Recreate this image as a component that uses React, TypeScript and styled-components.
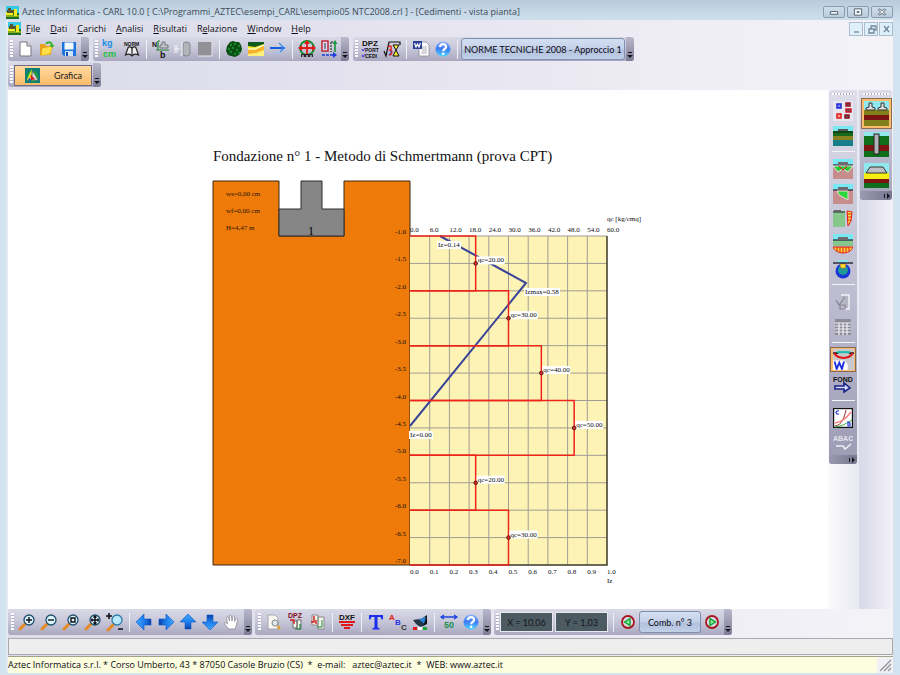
import React from "react";
import styled, { createGlobalStyle, css } from "styled-components";

const ui = `"Open Sans", "Noto Sans", sans-serif`;
const sans = `Lato, "Liberation Sans", Arial, sans-serif`;
const serif = `"Liberation Serif", "Times New Roman", serif`;

const GlobalStyle = createGlobalStyle`
  * { box-sizing: border-box; }
  body { margin: 0; background: #d3e3f0; }
  button, input { font: inherit; color: inherit; margin: 0; }
`;

const AppWindow = styled.div`
  min-height: 100vh;
  display: flex;
  flex-direction: column;
  padding: 0 7px 2px 6px;
  background: linear-gradient(180deg, #b9cadb 0, #d3e3f0 24px);
  font-family: ${ui};
  font-size: 10px;
  color: #1a1a22;
`;

const TitleBar = styled.header`
  height: 20px;
  display: flex;
  align-items: center;
  gap: 3px;
  padding: 4px 0 0;
`;

const Title = styled.h1`
  flex: 1;
  margin: 0;
  font-size: 9px;
  line-height: 14px;
  font-weight: 400;
  white-space: nowrap;
  color: #3f4c5a;
`;

const WindowButtons = styled.div<{ $small?: boolean }>`
  display: flex;
  gap: ${(p) => (p.$small ? 1 : 2)}px;
`;

const WindowButton = styled.button<{ $small?: boolean }>`
  width: ${(p) => (p.$small ? 14 : 22)}px;
  height: ${(p) => (p.$small ? 14 : 12)}px;
  padding: 0;
  display: grid;
  place-items: center;
  border: 1px solid ${(p) => (p.$small ? "#a9bfd0" : "#8b9cb0")};
  border-radius: ${(p) => (p.$small ? 0 : 2)}px;
  background: ${(p) => (p.$small ? "#e0f0fa" : "linear-gradient(#d0deeb, #b9cbdc)")};
`;

const Client = styled.div`
  flex: 1;
  display: flex;
  flex-direction: column;
  border-left: 2px solid #e3eaf4;
  background: linear-gradient(90deg, #dcdcea 0%, #e2e1ed 35%, #eeedf5 75%, #f4f3f8 100%);
`;

const MenuBar = styled.nav`
  height: 17px;
  display: flex;
  align-items: center;
  gap: 10px;
`;

const MenuIcon = styled.span`
  display: flex;
  margin-right: -5px;
`;

const MenuItem = styled.a`
  color: #0c0c14;
  text-decoration: none;
  font-size: 9px;
  line-height: 14px;
  white-space: nowrap;
`;

const Spacer = styled.div`
  flex: 1;
`;

const ToolRow = styled.div<{ $gap?: number }>`
  display: flex;
  gap: ${(p) => p.$gap ?? 4}px;
  padding-bottom: 2px;
`;

const barFill = "linear-gradient(180deg, #dad9e6 0%, #c9c8da 45%, #a9a8c0 100%)";

const Toolbar = styled.div<{ $tall?: boolean }>`
  display: flex;
  align-items: center;
  height: ${(p) => (p.$tall ? 26 : 24)}px;
  border-radius: 3px;
  background: ${barFill};
`;

const Grip = styled.span<{ $wide?: boolean }>`
  flex: none;
  width: ${(p) => (p.$wide ? 8 : 6)}px;
  height: 18px;
  background: repeating-linear-gradient(180deg, #fbfbff 0 2px, #b1b0c5 2px 3px) center / 3px 18px no-repeat;
`;

const Sep = styled.span`
  flex: none;
  width: 1px;
  height: 19px;
  margin: 0 3px;
  background: #efeff6;
`;

const ToolButton = styled.button`
  flex: none;
  width: 22px;
  height: 22px;
  padding: 0;
  border: 0;
  background: none;
  display: grid;
  place-items: center;
`;

const MoreButton = styled.button`
  flex: none;
  align-self: stretch;
  width: 8px;
  margin-left: 1px;
  padding: 0 0 3px;
  border: 0;
  border-radius: 0 3px 3px 0;
  background: linear-gradient(180deg, #b9b8cb, #7d7c96);
  display: flex;
  align-items: flex-end;
  justify-content: center;
`;

const raised = css`
  border: 1px solid #7e8fb0;
  border-radius: 3px;
  background: linear-gradient(180deg, #d3dff2 0%, #c3d0e8 50%, #b1c0dc 55%, #c2d0e8 100%);
  color: #0b0b14;
`;

const TextButton = styled.button<{ $width: number }>`
  ${raised}
  width: ${(p) => p.$width}px;
  height: 22px;
  padding: 0;
  font-family: ${sans};
  font-size: 9px;
  white-space: nowrap;
`;

const ModeButton = styled.button`
  width: 78px;
  height: 21px;
  padding: 0 0 0 10px;
  display: flex;
  align-items: center;
  gap: 14px;
  border: 1px solid #6f6a86;
  background: linear-gradient(180deg, #ffd9a0, #fcbc6a);
  font-family: ${sans};
  font-size: 9px;
`;

const Workspace = styled.main`
  flex: 1;
  display: flex;
  margin-top: 1px;
`;

const Canvas = styled.section`
  flex: 1;
  min-width: 0;
  padding: 56px 0 0 205px;
  background: #fff;
`;

const ChartTitle = styled.h2`
  margin: 0 0 15px;
  font-family: ${serif};
  font-size: 15px;
  line-height: 20px;
  font-weight: 400;
  color: #111;
  white-space: nowrap;
`;

const Chart = styled.svg`
  display: block;
  width: 440px;
  max-width: 100%;
  overflow: visible;
  font-family: ${serif};
  font-size: 7px;
`;

const DockColumn = styled.aside<{ $wide?: boolean }>`
  width: ${(p) => (p.$wide ? 34 : 31)}px;
  padding: 0 1px;
  background: ${(p) =>
    p.$wide
      ? "linear-gradient(90deg, #d9d9e8, #f2f1f8)"
      : "linear-gradient(90deg, #fafafd, #e9e9f2)"};
`;

const Dock = styled.div<{ $wide?: boolean }>`
  width: ${(p) => (p.$wide ? 32 : 28)}px;
  display: flex;
  flex-direction: column;
  align-items: center;
  border-radius: 3px;
  background: ${(p) =>
    p.$wide
      ? "linear-gradient(180deg, #dddce9, #b9b8cc 60%, #a4a3ba)"
      : "linear-gradient(180deg, #dddce9, #c1c0d3 50%, #9c9bb4)"};
`;

const DockGrip = styled.span`
  width: 80%;
  height: 8px;
  background: repeating-linear-gradient(90deg, #fff 0 2px, #a9a8bd 2px 3px) center / 100% 2px no-repeat;
`;

const DockButton = styled.button<{ $wide?: boolean; $active?: boolean }>`
  flex: none;
  width: ${(p) => (p.$wide ? 31 : 26)}px;
  height: ${(p) => (p.$wide ? 31 : 25)}px;
  padding: 0;
  display: grid;
  place-items: center;
  border: 1px solid ${(p) => (p.$active ? "#8a6b52" : "transparent")};
  background: ${(p) => (p.$active ? "#fcbc70" : "none")};
`;

const DockSep = styled.span`
  flex: none;
  width: 23px;
  height: 1px;
  margin: 3px 0 4px;
  background: #f3f3f9;
`;

const DockMore = styled.button`
  width: 100%;
  height: 9px;
  padding: 0 2px;
  display: flex;
  align-items: center;
  justify-content: flex-end;
  border: 0;
  border-radius: 0 0 3px 3px;
  background: linear-gradient(90deg, #9b9ab2, #77768f);
`;

const Coordinate = styled.input`
  width: 53px;
  height: 20px;
  margin-right: 2px;
  padding: 0;
  border: 1px solid #e8e8f0;
  background: #4c5a62;
  color: #11161a;
  font-family: ${sans};
  font-size: 9px;
  text-align: center;
`;

const MessageBox = styled.div`
  height: 17px;
  margin-top: 1px;
  border: 1px solid #a9a9ae;
  background: #eeeeee;
`;

const StatusBar = styled.footer`
  height: 17px;
  margin-top: 1px;
  display: flex;
  align-items: center;
  border-top: 1px solid #a3a38c;
  background: #fdfde0;
`;

const StatusText = styled.p`
  flex: 1;
  margin: 0;
  font-size: 9px;
  line-height: 14px;
  white-space: pre;
  color: #0c0c12;
`;

const ResizeCorner = styled.span`
  width: 16px;
  height: 16px;
  background: #f1f1f5;
`;

const Svg = ({ size = 20, children }: { size?: number; children: React.ReactNode }) => (
  <svg width={size} height={size} viewBox="0 0 20 20" aria-hidden="true">
    {children}
  </svg>
);

const AppLogo = () => (
  <svg width="13" height="13" viewBox="0 0 13 13" aria-hidden="true">
    <rect width="13" height="7" fill="#35c9e8" />
    <rect y="7" width="13" height="6" fill="#1f6f22" />
    <rect y="6" width="7" height="3" fill="#f5ee20" />
    <path d="M2 2h3v2h3v3H1V4h1z" fill="#5a5330" />
    <rect x="8" y="3" width="3" height="7" fill="#f3ea1c" />
    <path d="M0 10h13" stroke="#f3ea1c" />
  </svg>
);

const Down = () => (
  <svg width="6" height="6" viewBox="0 0 6 6" aria-hidden="true">
    <path d="M1 .500h4" stroke="#15151c" />
    <path d="M0 3h6L3 6z" fill="#15151c" />
  </svg>
);

const DownMore = () => (
  <MoreButton aria-label="Altri pulsanti">
    <Down />
  </MoreButton>
);

const SideMore = () => (
  <DockMore aria-label="Altri pulsanti">
    <svg width="6" height="6" viewBox="0 0 6 6" aria-hidden="true">
      <path d="M.500 1v4" stroke="#15151c" />
      <path d="M3 0v6l3-3z" fill="#15151c" />
    </svg>
  </DockMore>
);

const pix = { fontFamily: "Liberation Sans", fontWeight: 700 } as const;

const HelpIcon = () => (
  <Svg>
    <defs>
      <linearGradient id="helpBlue" x1="0" y1="0" x2="0" y2="1">
        <stop offset="0" stopColor="#8fb4ff" />
        <stop offset="0.5" stopColor="#3d7cf5" />
        <stop offset="1" stopColor="#4fd8ff" />
      </linearGradient>
    </defs>
    <circle cx="10" cy="10" r="7.5" fill="url(#helpBlue)" />
    <path d="M7 8c0-4 6.500-3.800 6 .2-.3 1.800-2.800 1.900-2.800 4" fill="none" stroke="#fff" strokeWidth="2.200" />
    <circle cx="10.200" cy="14.800" r="1.300" fill="#fff" />
  </Svg>
);

const topFile = [
  <Svg key="n">
    <path d="M5 3h7l4 4v10H5z" fill="#fff" stroke="#77777f" />
    <path d="M12 3v4h4" fill="#e3e3ea" stroke="#77777f" />
  </Svg>,
  <Svg key="o">
    <path d="M3 5h5l1 2h5v9H3z" fill="#e9a21c" />
    <path d="M5 9l11-2-3 8-9 2z" fill="#ffe04a" stroke="#d89a18" strokeWidth=".6" />
    <path d="M9 5c2-3 6-2 6 2" fill="none" stroke="#37b32c" strokeWidth="1.800" />
    <path d="M12.500 6h5l-2.500 3z" fill="#37b32c" />
  </Svg>,
  <Svg key="s">
    <path d="M3 3h14v14H5l-2-2z" fill="#1e74dd" />
    <rect x="5.500" y="3.500" width="9" height="7" fill="#f3f8ff" />
    <rect x="6" y="12" width="8" height="5" fill="#cfe3fb" />
    <rect x="7" y="13" width="2" height="4" fill="#1553b3" />
  </Svg>,
];

const UnitsIcon = (
  <Svg>
    <text x="2" y="7" fontSize="9" fill="#1790e6" {...pix}>kg</text>
    <text x="3" y="18" fontSize="9" fill="#18c23c" {...pix}>cm</text>
  </Svg>
);
const NormIcon = (
  <Svg>
    <text x="2" y="7" fontSize="5" fill="#111" {...pix}>NORM</text>
    <path d="M10 9c-2-2-4-1-4 0l-2.500 7c2-1 5-1 6.500 1 1.500-2 4.500-2 6.500-1L14 9c0-1-2-2-4 0z" fill="#eee" stroke="#222" strokeWidth="1.200" />
    <path d="M10 9v8" stroke="#222" strokeWidth="1.200" />
  </Svg>
);
const ParamIcon = (
  <Svg>
    <text x="1" y="8" fontSize="7" fill="#111" {...pix}>N</text>
    <path d="M7 2v9M7 2h2M5 11h13" stroke="#27842f" strokeWidth="1.200" />
    <path d="M11 3h3v3h3v3H9V6h2z" fill="#c4c4cc" stroke="#66666e" strokeWidth=".8" />
    <text x="9" y="19" fontSize="9" fill="#111" {...pix}>b</text>
  </Svg>
);
const PlateIcon = (
  <Svg>
    <rect x="10" y="3" width="7" height="14" rx="3" fill="#b3b3ba" stroke="#85858f" />
    <path d="M9 3v13H7M4 6v8M2 6v8M2 10h5" stroke="#f4f4fa" fill="none" />
  </Svg>
);
const GreyIcon = (
  <Svg>
    <rect x="3" y="3" width="14" height="14" fill="#909096" />
    <path d="M3 17h14V3" stroke="#e8e8ee" fill="none" />
  </Svg>
);
const SoilIcon = (
  <Svg>
    <path d="M6 3l3-1 3 1 3 0 2 3 1 4-1 3-2 3-4 2-4-1-3-1-2-4 1-5z" fill="#0b4d12" />
    <g fill="#1c8a2e">
      <circle cx="7" cy="6" r="1.200" /><circle cx="11" cy="5" r="1.200" /><circle cx="15" cy="7" r="1.200" />
      <circle cx="5" cy="10" r="1.200" /><circle cx="9" cy="9" r="1.200" /><circle cx="13" cy="11" r="1.200" />
      <circle cx="7" cy="13" r="1.200" /><circle cx="11" cy="15" r="1.200" /><circle cx="15" cy="14" r="1.200" />
    </g>
  </Svg>
);
const LayersIcon = (
  <Svg>
    <rect x="2" y="3" width="16" height="14" fill="#fbe52a" />
    <path d="M2 3h16v2L9 8 2 7z" fill="#0e5a1c" />
    <path d="M2 11l7 0 9-4v5l-9 3-7 1z" fill="#f7b12c" />
    <path d="M2 15l8-1 8-3v6H2z" fill="#fff07a" />
    <path d="M2 10l7 0 9-4" stroke="#fff" fill="none" />
  </Svg>
);
const WaterIcon = (
  <Svg>
    <path d="M2 9h15" stroke="#1261e0" strokeWidth="2" />
    <path d="M11 4l5 5-4 4" stroke="#3b8cf0" strokeWidth="1.400" fill="none" />
    <path d="M7 14h5" stroke="#8fc8ff" />
  </Svg>
);
const AxesIcon = (
  <Svg>
    <circle cx="10" cy="9" r="7" fill="none" stroke="#118a2d" strokeWidth="1.800" />
    <path d="M10 2v14M3 9h14" stroke="#e01919" strokeWidth="1.800" />
    <path d="M10 1l-3 4h6zM1 9l4-3v6zM19 9l-4-3v6z" fill="#e01919" />
    <path d="M4 15h12v3H4z" fill="#26262c" />
    <path d="M6 18v-2M10 18v-2M14 18v-2" stroke="#fff" />
  </Svg>
);
const CombIcon = (
  <Svg>
    <rect x="3" y="2" width="6" height="10" fill="#d6d9f5" stroke="#c01b28" strokeWidth="1.400" />
    <path d="M5 5h2M5 7h2M5 9h2" stroke="#333" />
    <path d="M12 3v10M12 3h2" stroke="#222" strokeDasharray="2 1" />
    <path d="M16 13V3" stroke="#16943a" strokeWidth="1.600" />
    <path d="M16 1l-2.500 4h5z" fill="#16943a" />
    <path d="M3 16h12" stroke="#1c3be0" strokeWidth="1.600" strokeDasharray="3 1" />
    <path d="M18 16l-4-3v6z" fill="#1c3be0" />
  </Svg>
);
const CptIcon = (
  <Svg>
    <text x="2" y="7" fontSize="8" fill="#111" {...pix}>DPZ</text>
    <text x="5" y="13" fontSize="5" fill="#111" {...pix}>PORT</text>
    <text x="5" y="19" fontSize="5" fill="#111" {...pix}>CEDI</text>
    <path d="M2 10l1 2 2-3M2 16l1 2 2-3" stroke="#4b2be0" fill="none" />
  </Svg>
);
const RunIcon = (
  <Svg>
    <path d="M2 12l2 5 3-14h11v3" stroke="#111" strokeWidth="1.200" fill="none" />
    <path d="M11 6h6l-3 5 3 6h-6l3-6z" fill="#f7ee34" stroke="#111" />
    <path d="M6 8c4-3 4 2 2 3 3 1 2 5-1 5" stroke="#e11d1d" fill="none" strokeWidth="1.400" />
    <path d="M7 16c0-2 3-2 2-4" stroke="#2440e0" fill="none" />
  </Svg>
);
const WordIcon = (
  <Svg>
    <path d="M8 3h7l3 3v11H8z" fill="#fff" stroke="#8a8a94" strokeWidth=".8" />
    <path d="M11 8h5M11 10h5M11 12h5M10 14h6" stroke="#9b9ba6" strokeWidth=".8" />
    <rect x="2" y="2" width="9" height="8" fill="#2a3f96" />
    <path d="M3.500 4l1.500 4 1.500-3 1.500 3 1.500-4" stroke="#fff" fill="none" strokeWidth="1.200" />
  </Svg>
);
const GraficaIcon = (
  <svg width="15" height="15" viewBox="0 0 16 16" aria-hidden="true">
    <rect width="16" height="16" fill="#0e7d78" />
    <circle cx="8" cy="9" r="6" fill="#19a13c" />
    <path d="M7 1L2 13h5z" fill="#f3ea2c" />
    <path d="M8 3l6 10H7z" fill="#d8d8dc" stroke="#555" strokeWidth=".6" />
    <path d="M6 7l5 5-5 1z" fill="#d92020" />
    <path d="M3 13l2-3 2 4z" fill="#2542d8" />
  </svg>
);

const Zoomer = ({ mark }: { mark: string }) => (
  <Svg>
    <path d="M8 12l-5 5" stroke="#e48a24" strokeWidth="3" strokeLinecap="round" />
    <circle cx="12" cy="8" r="5" fill="#d9f3fb" stroke="#23506e" strokeWidth="1.300" />
    <path d={mark} stroke="#101018" strokeWidth="1.400" fill="none" />
  </Svg>
);
const marks = [
  "M9 8h6M12 5v6",
  "M9 8h6",
  "M10 6h4v4h-4z",
  "M8 8h8M12 4v8M10.500 5.500l1.500-1.500 1.500 1.500M10.500 10.500l1.500 1.500 1.500-1.500M9 6.500v3M15 6.500v3",
];
const ZoomPrev = (
  <Svg>
    <path d="M9 12l-6 6" stroke="#e48a24" strokeWidth="3" strokeLinecap="round" />
    <circle cx="12" cy="8" r="5" fill="#b9e9fa" stroke="#2e7ca8" strokeWidth="1.300" />
    <path d="M1 4h6M4 1v6M13 17h5" stroke="#101018" strokeWidth="1.600" />
  </Svg>
);
const BlueArrow = ({ turn }: { turn: number }) => (
  <Svg>
    <defs>
      <linearGradient id="arrowBlue" x1="0" y1="0" x2="1" y2="0">
        <stop offset="0" stopColor="#3fa8ff" />
        <stop offset="0.600" stopColor="#1b78ea" />
        <stop offset="1" stopColor="#0b3da8" />
      </linearGradient>
    </defs>
    <path
      d="M2 10l8-8v5h7v6h-7v5z"
      fill="url(#arrowBlue)"
      stroke="#0e58c4"
      strokeWidth=".6"
      transform={`rotate(${turn} 10 10)`}
    />
  </Svg>
);
const HandIcon = (
  <Svg>
    <path
      d="M7 17c-2-2-4-4-4.500-6 1-1 2 0 3 1L4.500 5.500C5 4.300 6.300 4.600 6.500 5.500L7.500 9 7.300 4c.4-1.200 1.700-1.100 2 0L10 9l.8-4.500c.5-1 1.700-.8 1.800.2L12.500 9.500l1.500-3c.8-.8 1.800-.2 1.600.7L14.500 13l-1.500 4z"
      fill="#fff"
      stroke="#8d8d98"
      strokeWidth=".8"
    />
  </Svg>
);
const PreviewIcon = (
  <Svg>
    <path d="M4 3h7l3 3v11H4z" fill="#f7f7f0" stroke="#9b9ba3" strokeWidth=".8" />
    <circle cx="11" cy="11" r="3" fill="#dde7f0" stroke="#888" />
    <path d="M13.500 14l2.500 3" stroke="#e0a020" strokeWidth="2.200" />
  </Svg>
);
const DpzDoc = (
  <Svg>
    <text x="2" y="6" fontSize="7" fill="#7c1018" {...pix}>DPZ</text>
    <path d="M7 9h4v7H7zM11 8h4v9h-4z" fill="#f3f3ea" stroke="#555" strokeWidth=".8" />
    <path d="M4 8h4v4" stroke="#d01818" fill="none" strokeWidth="1.300" />
    <path d="M9 17h5v-5" stroke="#18853a" fill="none" strokeWidth="1.200" />
  </Svg>
);
const DocIcon = (
  <Svg>
    <path d="M4 3h6v10H4zM10 5h6v12h-6z" fill="#f3f3ea" stroke="#777" strokeWidth=".8" />
    <path d="M6 4v6H3M8 8v4" stroke="#d01818" fill="none" strokeWidth="1.400" />
    <path d="M9 15h5V8" stroke="#18853a" fill="none" />
  </Svg>
);
const DxfIcon = (
  <Svg>
    <text x="2" y="8" fontSize="8" fill="#111" {...pix}>DXF</text>
    <path d="M2 10h16M4 13h12M7 16h6" stroke="#e01818" strokeWidth="2" />
  </Svg>
);
const TextIcon = (
  <Svg>
    <path d="M3 3h14v4.500h-1.500L14.500 5h-3v10.500l2 .8V17.500h-7v-1.200l2-.8V5h-3l-1 2.500H3z" fill="#1d2df0" />
  </Svg>
);
const AbcIcon = (
  <Svg>
    <text x="1" y="8" fontSize="8" fill="#e02020" {...pix}>A</text>
    <text x="7" y="13" fontSize="8" fill="#2a35e0" {...pix}>B</text>
    <text x="13" y="18" fontSize="8" fill="#333" {...pix}>C</text>
  </Svg>
);
const PaintIcon = (
  <Svg>
    <path d="M10 8l7-5v9l-4 2z" fill="#111" />
    <path d="M3 8l6-1 5 6-3 2c-3-1-5-3-8-7z" fill="#23384a" />
    <path d="M9 7l5 5 2-7z" fill="#2a86e0" />
    <path d="M3 15h4v3H3z" fill="#e01818" />
    <path d="M8 15h4v3H8z" fill="#fff" />
    <path d="M13 15h4v3h-4z" fill="#18a83a" />
  </Svg>
);
const DimIcon = (
  <Svg>
    <path d="M2 5h16M5 3L2 5l3 2M15 3l3 2-3 2" stroke="#1d46e0" strokeWidth="1.300" fill="none" />
    <text x="5" y="16" fontSize="9" fill="#14904a" {...pix}>50</text>
  </Svg>
);
const StepIcon = ({ flip }: { flip?: boolean }) => (
  <Svg>
    <circle cx="10" cy="10" r="6" fill="#dddce6" stroke="#a81420" strokeWidth="1.800" />
    <path d="M6.500 10l5.500-3.500v7z" fill="#7ff09a" stroke="#12a030" strokeWidth="1.400" transform={flip ? "rotate(180 10 10)" : undefined} />
  </Svg>
);

const PlanIcon = (
  <Svg>
    <rect width="20" height="20" fill="#e8e6ee" />
    <g strokeWidth="1.500">
      <rect x="4" y="3" width="4" height="4" fill="#7484ff" stroke="#1a28d0" />
      <rect x="13" y="2" width="4" height="3" fill="#555" stroke="#a01424" />
      <rect x="13" y="8" width="5" height="3" fill="#555" stroke="#d01828" />
      <rect x="4" y="13" width="4" height="4" fill="#ff9a8c" stroke="#e01818" />
      <rect x="12" y="14" width="4" height="3" fill="#555" stroke="#8c1424" />
    </g>
  </Svg>
);
const StratIcon = (
  <Svg>
    <rect width="20" height="6" fill="#7ae8f2" />
    <rect y="5" width="20" height="5" fill="#176a1d" />
    <rect y="10" width="20" height="4" fill="#8a8420" />
    <rect y="14" width="20" height="6" fill="#177f8c" />
    <path d="M5 3h10v2H5z" fill="#555" />
    <path d="M0 6h20" stroke="#10220f" />
  </Svg>
);
const Ground = ({ fill }: { fill: string }) => (
  <>
    <rect width="20" height="6" fill="#7ae8f2" />
    <rect y="6" width="20" height="14" fill={fill} />
    <path d="M0 6h20" stroke="#223" strokeWidth="1.200" />
    <path d="M5 3h10v3H5z" fill="#6c6c70" />
  </>
);
const BearingIcon = (
  <Svg>
    <Ground fill="#c78d8d" />
    <path d="M0 7h20l-5 6-5-3-5 3z" fill="#2cc63a" stroke="#fff" strokeWidth=".8" />
    <path d="M6 7l4 4 4-4" stroke="#e01818" fill="none" />
  </Svg>
);
const PunchIcon = (
  <Svg>
    <Ground fill="#c78d8d" />
    <path d="M4 7h11v9L6 11z" fill="#2cd63a" stroke="#f2dada" />
  </Svg>
);
const StressIcon = (
  <Svg>
    <rect y="2" width="12" height="16" fill="#86c88c" />
    <path d="M0 3h12" stroke="#223" />
    <path d="M1 1h7v2H1z" fill="#666" />
    <path d="M14 2l5 1-1 9-3 5z" fill="#ffe24a" stroke="#e01818" />
    <path d="M14 5h4M14 8h4M14 11h4" stroke="#e01818" />
  </Svg>
);
const PressureIcon = (
  <Svg>
    <Ground fill="#86c88c" />
    <rect y="12" width="20" height="8" fill="#c5c4d6" />
    <path d="M0 13h20c-3 8-17 8-20 0z" fill="#ffd23a" stroke="#e01818" />
    <path d="M4 13v4M7 13v5M10 13v6M13 13v5M16 13v4" stroke="#e01818" />
  </Svg>
);
const BulbIcon = (
  <Svg>
    <path d="M5 1h10v3H5z" fill="#8be2ec" />
    <circle cx="10" cy="12" r="7.500" fill="#1b36d8" />
    <circle cx="10" cy="11" r="5" fill="#1f9a94" />
    <path d="M7 5h6l-1 4H8z" fill="#ffe22a" stroke="#e06a18" strokeWidth=".6" />
    <path d="M0 4h20" stroke="#223" strokeWidth="1.400" />
  </Svg>
);
const GhostDoc = (
  <Svg>
    <path d="M8 3h8v14h-5" fill="#b7b6c4" stroke="#f4f4fa" strokeWidth="1.400" />
    <path d="M3 8l3 5 6-8M7 13h5v4H7z" fill="none" stroke="#85848f" strokeWidth="1.200" />
  </Svg>
);
const GhostTable = (
  <Svg>
    <rect x="2" y="2" width="16" height="16" fill="#8c8b98" />
    <path d="M2 6h16M2 9h16M2 12h16M2 15h16M6 6v12M10 6v12M14 6v12" stroke="#f1f1f7" strokeWidth="1.200" />
  </Svg>
);
const SettleIcon = (
  <Svg size={21}>
    <rect width="20" height="20" fill="#c9c8cd" />
    <path d="M0 4h5M15 4h5" stroke="#222" strokeWidth="1.600" />
    <path d="M4 3h12" stroke="#18bfa8" strokeWidth="2" />
    <path d="M1 4c4 6 14 6 18 0" fill="none" stroke="#e01818" strokeWidth="2" />
    <path d="M0 20v-9h11l3 4v5z" fill="#fff" />
    <path d="M1.500 12l2 7 2.500-6 2.500 6 2-7" fill="none" stroke="#1c30e0" strokeWidth="1.800" />
  </Svg>
);
const FondIcon = (
  <Svg>
    <text x="0" y="7" fontSize="7" fill="#111" {...pix}>FOND</text>
    <path d="M2 11h9V8l6 5-6 4v-3H2z" fill="#d6dcff" stroke="#1a2386" strokeWidth="1.600" />
  </Svg>
);
const CurvesIcon = (
  <Svg>
    <rect x=".500" y=".500" width="19" height="19" fill="#fff" stroke="#111" strokeWidth="1.400" />
    <path d="M2 18C9 17 11 10 13 2" stroke="#9a2a2a" fill="none" />
    <path d="M2 15c8-1 12-6 16-11" stroke="#ff7a7a" fill="none" strokeWidth="1.300" />
    <path d="M2 19c8-1 12-4 17-7" stroke="#32a83c" fill="none" />
    <path d="M6 3c-4-1-4 4 0 3M15 14v4h2v-3z" stroke="#2636e0" fill="none" strokeWidth="1.200" />
  </Svg>
);
const AbacIcon = (
  <Svg>
    <text x="0" y="8" fontSize="7" fill="#e6e5ee" {...pix}>ABAC</text>
    <path d="M3 13h7l2 3 6-5" fill="none" stroke="#efeff5" strokeWidth="1.600" />
  </Svg>
);

const FootingsBig = (
  <svg width="25" height="25" viewBox="0 0 25 25" aria-hidden="true">
    <rect width="25" height="9" fill="#8fe9ee" />
    <rect y="9" width="25" height="16" fill="#81801a" />
    <rect y="14" width="25" height="5" fill="#7d1414" />
    <path d="M2 9V7l3-1V2h3v4l3 1v2zM14 9V7l3-1V2h3v4l3 1v2z" fill="#ddd" stroke="#333" />
  </svg>
);
const PileBig = (
  <svg width="25" height="25" viewBox="0 0 25 25" aria-hidden="true">
    <rect width="25" height="5" fill="#8fe9ee" />
    <rect y="4" width="25" height="21" fill="#0f6e1a" />
    <rect y="13" width="25" height="6" fill="#7d1414" />
    <rect x="10" y="2" width="5" height="20" fill="#b2b2b8" stroke="#222" />
  </svg>
);
const RaftBig = (
  <svg width="25" height="25" viewBox="0 0 25 25" aria-hidden="true">
    <rect width="25" height="10" fill="#8fe9ee" />
    <rect y="10" width="25" height="6" fill="#f4ee12" />
    <rect y="16" width="25" height="4" fill="#7d1414" />
    <rect y="20" width="25" height="5" fill="#0f6e1e" />
    <path d="M6 4h13l4 6H2z" fill="#c0c0c4" stroke="#333" />
  </svg>
);

type Tool = [string, React.ReactNode] | "sep";

const renderTools = (tools: Tool[]) =>
  tools.map((t, i) =>
    t === "sep" ? (
      <Sep key={i} />
    ) : (
      <ToolButton key={i} aria-label={t[0]}>
        {t[1]}
      </ToolButton>
    )
  );

const fileTools: Tool[] = [
  ["Nuovo", topFile[0]],
  ["Apri", topFile[1]],
  ["Salva", topFile[2]],
];
const dataTools: Tool[] = [
  ["Unità di misura", UnitsIcon],
  ["Normativa", NormIcon],
  "sep",
  ["Fattori", ParamIcon],
  ["Piastra", PlateIcon],
  ["Sezione", GreyIcon],
  "sep",
  ["Terreni", SoilIcon],
  ["Stratigrafia", LayersIcon],
  ["Falda", WaterIcon],
  "sep",
  ["Carichi", AxesIcon],
  ["Combinazioni", CombIcon],
];
const analysisTools: Tool[] = [
  ["Opzioni", CptIcon],
  ["Analisi", RunIcon],
  "sep",
  ["Relazione", WordIcon],
  ["Guida", <HelpIcon key="h" />],
  "sep",
];
const zoomTools: Tool[] = [
  ...["Ingrandisci", "Riduci", "Zoom finestra", "Zoom tutto"].map(
    (n, i): Tool => [n, <Zoomer key={n} mark={marks[i]} />]
  ),
  ["Zoom precedente", ZoomPrev],
  "sep",
  ["Sinistra", <BlueArrow key="l" turn={0} />],
  ["Destra", <BlueArrow key="r" turn={180} />],
  ["Su", <BlueArrow key="u" turn={90} />],
  ["Giù", <BlueArrow key="d" turn={270} />],
  ["Sposta", HandIcon],
];
const printTools: Tool[] = [
  ["Anteprima", PreviewIcon],
  ["Opzioni disegno", DpzDoc],
  ["Copia", DocIcon],
  "sep",
  ["Esporta DXF", DxfIcon],
  "sep",
  ["Testo", TextIcon],
  ["Caratteri", AbcIcon],
  ["Colori", PaintIcon],
  "sep",
  ["Quote", DimIcon],
  ["Guida", <HelpIcon key="h" />],
];
const resultTools: Tool[] = [
  ["Pianta", PlanIcon],
  ["Stratigrafia", StratIcon],
  "sep",
  ["Portanza", BearingIcon],
  ["Scorrimento", PunchIcon],
  ["Tensioni", StressIcon],
  ["Pressioni", PressureIcon],
  ["Bulbo", BulbIcon],
  "sep",
  ["Verifiche", GhostDoc],
  ["Tabella", GhostTable],
  "sep",
  ["Cedimenti", SettleIcon],
  ["Fondazione", FondIcon],
  "sep",
  ["Curve", CurvesIcon],
  ["Abaco", AbacIcon],
];

// Menu label and the index of its underlined access key.
const menus: [string, number][] = [
  ["File", 0],
  ["Dati", 0],
  ["Carichi", 0],
  ["Analisi", 0],
  ["Risultati", 0],
  ["Relazione", 1],
  ["Window", 0],
  ["Help", 0],
];

const left = 197;
const top = 55;
const plotW = 197;
const plotH = 329;
const depthY = (d: number) => top + ((d - 1) * plotH) / 6;
const qcX = (q: number) => left + (q * plotW) / 60;
const layers = [20, 30, 40, 50, 20, 30];

const Label = ({ x, y, w, children }: { x: number; y: number; w: number; children: React.ReactNode }) => (
  <g>
    <rect x={x - 1} y={y - 6} width={w} height="8" fill="#fff" />
    <text x={x} y={y}>{children}</text>
  </g>
);

const SettlementChart = () => (
  <Chart viewBox="0 0 440 405" role="img" aria-label="Metodo di Schmertmann">
    <path d="M0 0H66V55H131V0H197V384H0Z" fill="#ee7a0a" stroke="#3a2a18" />
    <path d="M66 28H88V0H109V28H131V55H66Z" fill="#868686" stroke="#2c2c2c" />
    <text x="95" y="54" fontSize="12">1</text>
    <g fill="#2a1604">
      <text x="13" y="15">ws=0,00 cm</text>
      <text x="13" y="32">wf=0,00 cm</text>
      <text x="13" y="49">H=4,47 m</text>
    </g>
    <rect x={left} y={top} width={plotW} height={plotH} fill="#fcf3b5" />
    <g stroke="#a19d94">
      {Array.from({ length: 9 }, (_, i) => (
        <line key={i} x1={qcX((i + 1) * 6)} x2={qcX((i + 1) * 6)} y1={top} y2={top + plotH} />
      ))}
      {Array.from({ length: 12 }, (_, i) => (
        <line key={i} x1={left} x2={left + plotW} y1={depthY(1 + i / 2)} y2={depthY(1 + i / 2)} />
      ))}
    </g>
    <path d={`M${left + plotW} ${top}V${top + plotH}H${left}`} fill="none" stroke="#3c3a28" strokeWidth="1.500" />
    <path d={`M227 ${top}L313 102L${left} 245`} fill="none" stroke="#3a459a" strokeWidth="2" />
    <g fill="none" stroke="#ee2418" strokeWidth="1.500">
      {layers.map((q, i) => (
        <path key={i} d={`M${left} ${depthY(i + 1)}H${qcX(q)}V${depthY(i + 2)}H${left}`} />
      ))}
    </g>
    <g fill="#0c0c10">
      <Label x={225} y={66} w={24}>Iz=0.14</Label>
      <Label x={312} y={113} w={36}>Izmax=0.58</Label>
      <Label x={197} y={256} w={24}>Iz=0.00</Label>
      {layers.map((q, i) => (
        <Label key={i} x={qcX(q) + 2} y={depthY(i + 1.5) - 1} w={28}>
          qc={q}.00
        </Label>
      ))}
      {Array.from({ length: 13 }, (_, i) => (
        <text key={i} x="193" y={depthY(1 + i / 2) - 2} textAnchor="end">
          -{(1 + i / 2).toFixed(1)}
        </text>
      ))}
      {Array.from({ length: 11 }, (_, i) => (
        <g key={i}>
          <text x={qcX(i * 6)} y="51">{(i * 6).toFixed(1)}</text>
          <text x={qcX(i * 6)} y="393">{(i / 10).toFixed(1)}</text>
        </g>
      ))}
      <text x="394" y="40">qc [kg/cmq]</text>
      <text x="394" y="402">Iz</text>
    </g>
    {layers.map((q, i) => (
      <circle key={i} cx={qcX(q)} cy={depthY(i + 1.5)} r="1.800" fill="#e02a20" stroke="#5c1a18" />
    ))}
  </Chart>
);

const winMarks = ["M3 5h8v3H3z", "M3 2h8v7H3zM6 5h2v1H6z", "M4 2l3 2 3-2 1 1-2.500 2.500L11 8l-1 1-3-2-3 2-1-1 2.500-2.500L3 3z"];
const docMarks = ["M3 9h5", "M3 6h5v4H3zM5 6V3h5v4H8", "M3 3l5 6M8 3L3 9"];

export default function App() {
  return (
    <>
      <GlobalStyle />
      <AppWindow>
        <TitleBar>
          <AppLogo />
          <Title>
            {"Aztec Informatica - CARL 10.0 [ C:\\Programmi_AZTEC\\esempi_CARL\\esempio05 NTC2008.crl ] - [Cedimenti - vista pianta]"}
          </Title>
          <WindowButtons>
            {["Riduci a icona", "Ripristina", "Chiudi"].map((n, i) => (
              <WindowButton key={n} aria-label={n}>
                <svg width="14" height="10" viewBox="0 0 14 11" aria-hidden="true">
                  <path d={winMarks[i]} fill="#f5f8fb" stroke="#4d5a68" />
                </svg>
              </WindowButton>
            ))}
          </WindowButtons>
        </TitleBar>
        <Client>
          <MenuBar>
            <MenuIcon>
              <AppLogo />
            </MenuIcon>
            {menus.map(([label, key]) => (
              <MenuItem key={label} href="#">
                {label.slice(0, key)}
                <u>{label[key]}</u>
                {label.slice(key + 1)}
              </MenuItem>
            ))}
            <Spacer />
            <WindowButtons $small>
              {["Riduci documento", "Ripristina documento", "Chiudi documento"].map((n, i) => (
                <WindowButton key={n} $small aria-label={n}>
                  <svg width="11" height="12" viewBox="0 0 11 12" aria-hidden="true">
                    <path d={docMarks[i]} fill="none" stroke="#71889c" strokeWidth="1.300" />
                  </svg>
                </WindowButton>
              ))}
            </WindowButtons>
          </MenuBar>
          <ToolRow>
            <Toolbar>
              <Grip />
              {renderTools(fileTools)}
              <DownMore />
            </Toolbar>
            <Toolbar>
              <Grip />
              {renderTools(dataTools)}
              <DownMore />
            </Toolbar>
            <Toolbar>
              <Grip />
              {renderTools(analysisTools)}
              <TextButton $width={164}>NORME TECNICHE 2008 - Approccio 1</TextButton>
              <DownMore />
            </Toolbar>
          </ToolRow>
          <ToolRow>
            <Toolbar>
              <Grip />
              <ModeButton>
                {GraficaIcon}
                Grafica
              </ModeButton>
              <DownMore />
            </Toolbar>
          </ToolRow>
          <Workspace>
            <Canvas>
              <ChartTitle>Fondazione n° 1 - Metodo di Schmertmann (prova CPT)</ChartTitle>
              <SettlementChart />
            </Canvas>
            <DockColumn>
              <Dock>
                <DockGrip />
                {resultTools.map((t, i) =>
                  t === "sep" ? (
                    <DockSep key={i} />
                  ) : (
                    <DockButton key={i} aria-label={t[0]} $active={t[0] === "Cedimenti"}>
                      {t[1]}
                    </DockButton>
                  )
                )}
                <SideMore />
              </Dock>
            </DockColumn>
            <DockColumn $wide>
              <Dock $wide>
                <DockGrip />
                <DockButton $wide $active aria-label="Fondazioni superficiali">{FootingsBig}</DockButton>
                <DockButton $wide aria-label="Pali">{PileBig}</DockButton>
                <DockButton $wide aria-label="Platea">{RaftBig}</DockButton>
                <SideMore />
              </Dock>
            </DockColumn>
          </Workspace>
          <ToolRow $gap={3}>
            <Toolbar $tall>
              <Grip $wide />
              {renderTools(zoomTools)}
              <DownMore />
            </Toolbar>
            <Toolbar $tall>
              <Grip $wide />
              {renderTools(printTools)}
              <DownMore />
            </Toolbar>
            <Toolbar $tall>
              <Grip />
              <Coordinate aria-label="Coordinata X" readOnly defaultValue="X = 10,06" />
              <Coordinate aria-label="Coordinata Y" readOnly defaultValue="Y = 1,03" />
              <Sep />
              <ToolButton aria-label="Combinazione precedente">
                <StepIcon />
              </ToolButton>
              <TextButton $width={62}>Comb. n° 3</TextButton>
              <ToolButton aria-label="Combinazione successiva">
                <StepIcon flip />
              </ToolButton>
              <DownMore />
            </Toolbar>
          </ToolRow>
          <MessageBox />
          <StatusBar>
            <StatusText>
              {"Aztec Informatica s.r.l. * Corso Umberto, 43 * 87050 Casole Bruzio (CS)  *  e-mail:   aztec@aztec.it  *  WEB: www.aztec.it"}
            </StatusText>
            <ResizeCorner>
              <svg width="16" height="16" viewBox="0 0 16 16" aria-hidden="true">
                <path d="M3 14L14 3M7 14l7-7M11 14l3-3" stroke="#8f8f96" strokeWidth="1.200" />
              </svg>
            </ResizeCorner>
          </StatusBar>
        </Client>
      </AppWindow>
    </>
  );
}
